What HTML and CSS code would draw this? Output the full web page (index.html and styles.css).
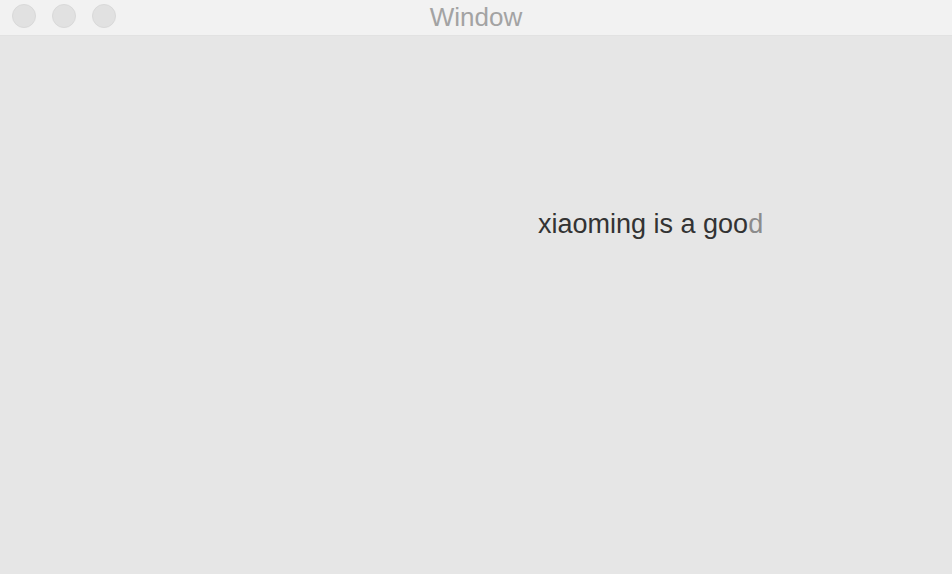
FILE: index.html
```html
<!DOCTYPE html>
<html>
<head>
<meta charset="utf-8">
<link rel="stylesheet" href="styles.css">
</head>
<body>
<div class="window">
  <div class="titlebar">
    <div class="lights">
      <span class="light"></span>
      <span class="light"></span>
      <span class="light"></span>
    </div>
    <div class="title">Window</div>
  </div>
  <div class="content">
    <div class="label">xiaoming is a goo<span class="fade">d</span></div>
  </div>
</div>
</body>
</html>
```
FILE: styles.css
```css
html, body {
  margin: 0;
  padding: 0;
  width: 952px;
  height: 574px;
  overflow: hidden;
  background: #e6e6e6;
}
.window {
  display: flex;
  flex-direction: column;
  height: 574px;
  font-family: "Liberation Sans", Arial, sans-serif;
}
.titlebar {
  position: relative;
  height: 35px;
  background: #f2f2f2;
  border-bottom: 1px solid #e2e2e2;
  display: flex;
  align-items: flex-start;
}
.lights {
  display: flex;
  gap: 16px;
  padding-left: 12px;
  padding-top: 4px;
}
.light {
  width: 24px;
  height: 24px;
  border-radius: 50%;
  background: #e1e1e1;
  border: 1px solid #d9d9d9;
  box-sizing: border-box;
}
.title {
  position: absolute;
  left: 0;
  right: 0;
  top: 0;
  line-height: 34px;
  text-align: center;
  font-size: 26px;
  color: #a3a3a3;
}
.content {
  flex: 1;
  background: #e6e6e6;
  padding-top: 173px;
  padding-left: 538px;
}
.label {
  font-size: 27px;
  color: #333333;
  line-height: 30px;
}
.fade {
  color: #8c8c8c;
}
```
